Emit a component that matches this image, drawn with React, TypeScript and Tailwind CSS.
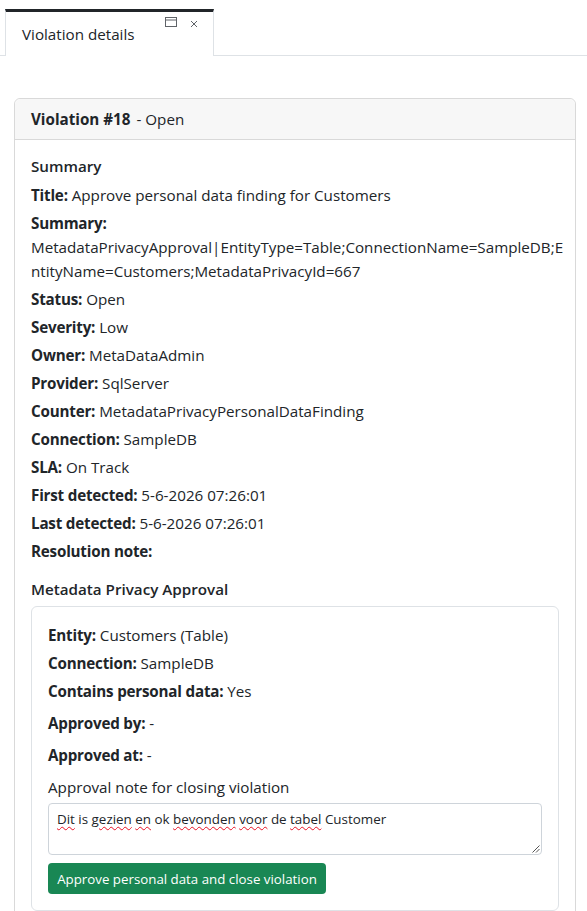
const Row = ({ label, value, className = 'mb-1' }: { label: string; value?: string; className?: string }) => (
  <p className={className}>
    <strong className="font-bold tracking-[-0.2px]">{label}</strong>
    {value ? ` ${value}` : ''}
  </p>
);

const wavy = 'underline decoration-wavy decoration-[#e81123] decoration-1 underline-offset-2';

export default function App() {
  return (
    <div className="h-[911px] overflow-hidden bg-white text-[15.2px] leading-6 text-[#212529] [font-family:'Open_Sans',sans-serif]">
      <div className="flex h-[56px] items-end border-b border-[#dee2e6] pl-[5px] pt-[9px]">
        <div className="relative -mb-px h-[47px] w-[209px] border-x border-[#dee2e6] border-t-[3px] border-t-[#212529] bg-white pl-4 pt-[10px]">
          Violation details
          <svg className="absolute left-[159px] top-[5px]" width="12" height="11" viewBox="0 0 12 11" fill="none">
            <rect x="0.5" y="0.5" width="11" height="9" stroke="#5f6368" />
            <path d="M1 3h10" stroke="#5f6368" />
          </svg>
          <svg className="absolute left-[184px] top-[8px]" width="8" height="8" viewBox="0 0 8 8" fill="none">
            <path d="M1 1l6 6M7 1L1 7" stroke="#5f6368" />
          </svg>
        </div>
      </div>

      <div className="ml-[14px] mr-[11px] mt-[42px] h-[900px] rounded-md border border-[#d9d9d9]">
        <div className="flex h-[41px] items-center rounded-t-md border-b border-[#d9d9d9] bg-[#f7f7f7] px-4">
          <strong className="font-bold">Violation #18</strong>
          <span className="ml-[6px]">- Open</span>
        </div>
        <div className="px-4 pt-[14px]">
          <p className="mb-[5px] font-semibold">Summary</p>
          <Row label="Title:" value="Approve personal data finding for Customers" />
          <p className="mb-1">
            <strong className="font-bold tracking-[-0.2px]">Summary:</strong>
            <br />
            MetadataPrivacyApproval|EntityType=Table;ConnectionName=SampleDB;E
            <br />
            ntityName=Customers;MetadataPrivacyId=667
          </p>
          <Row label="Status:" value="Open" />
          <Row label="Severity:" value="Low" />
          <Row label="Owner:" value="MetaDataAdmin" />
          <Row label="Provider:" value="SqlServer" />
          <Row label="Counter:" value="MetadataPrivacyPersonalDataFinding" />
          <Row label="Connection:" value="SampleDB" />
          <Row label="SLA:" value="On Track" />
          <Row label="First detected:" value="5-6-2026 07:26:01" />
          <Row label="Last detected:" value="5-6-2026 07:26:01" />
          <Row label="Resolution note:" className="mb-[14px]" />
          <p className="mb-[5px] font-semibold">Metadata Privacy Approval</p>
          <div className="h-[305px] rounded-md border border-[#dee2e6] px-4 pt-4">
            <Row label="Entity:" value="Customers (Table)" />
            <Row label="Connection:" value="SampleDB" />
            <Row label="Contains personal data:" value="Yes" className="mb-2" />
            <Row label="Approved by:" value="-" className="mb-2" />
            <Row label="Approved at:" value="-" className="mb-2" />
            <p className="mb-1">Approval note for closing violation</p>
            <div className="relative h-[52px] whitespace-nowrap rounded border border-[#ced4da] bg-white px-2 py-[5px] text-[13.4px] leading-[20px]">
              <span className={wavy}>Dit</span> is <span className={wavy}>gezien</span> <span className={wavy}>en</span> ok{' '}
              <span className={wavy}>bevonden</span> <span className={wavy}>voor</span> de <span className={wavy}>tabel</span> Customer
              <svg className="absolute bottom-[1px] right-[1px]" width="9" height="9" viewBox="0 0 9 9" fill="none">
                <path d="M8.5 1.5l-7 7M8.5 5l-3.5 3.5" stroke="#555" />
              </svg>
            </div>
            <button className="mt-2 block h-[31px] w-[278px] rounded bg-[#198754] text-[13.3px] leading-[20px] text-white">
              Approve personal data and close violation
            </button>
          </div>
        </div>
      </div>
    </div>
  );
}
